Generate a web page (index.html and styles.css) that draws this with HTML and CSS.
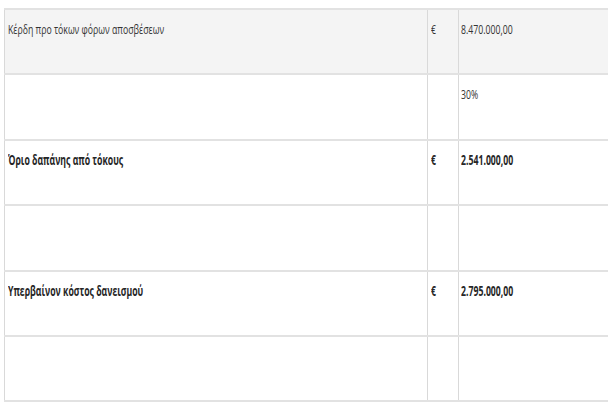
FILE: index.html
```html
<!DOCTYPE html>
<html lang="el">
<head>
<meta charset="utf-8">
<link rel="stylesheet" href="styles.css">
</head>
<body>
<table class="calc">
  <tr class="shaded">
    <td class="label"><span class="txt">Κέρδη προ τόκων φόρων αποσβέσεων</span></td>
    <td class="cur"><span class="txt">€</span></td>
    <td class="val"><span class="txt">8.470.000,00</span></td>
  </tr>
  <tr>
    <td class="label"></td>
    <td class="cur"></td>
    <td class="val"><span class="txt">30%</span></td>
  </tr>
  <tr class="strong">
    <td class="label"><span class="txt">Όριο δαπάνης από τόκους</span></td>
    <td class="cur"><span class="txt">€</span></td>
    <td class="val"><span class="txt">2.541.000,00</span></td>
  </tr>
  <tr>
    <td class="label"></td>
    <td class="cur"></td>
    <td class="val"></td>
  </tr>
  <tr class="strong">
    <td class="label"><span class="txt">Υπερβαίνον κόστος δανεισμού</span></td>
    <td class="cur"><span class="txt">€</span></td>
    <td class="val"><span class="txt">2.795.000,00</span></td>
  </tr>
  <tr>
    <td class="label"></td>
    <td class="cur"></td>
    <td class="val"></td>
  </tr>
</table>
</body>
</html>
```
FILE: styles.css
```css
html, body {
  background: #ffffff;
}
body {
  margin: 8px 4px 0 4px;
  font-family: "Open Sans", "Noto Sans", sans-serif;
  font-size: 13.5px;
  color: #333333;
}
.calc {
  width: 605px;
  border-collapse: collapse;
  table-layout: fixed;
}
.calc tr {
  height: 65.4px;
}
.calc td {
  border-top: 2px solid #e2e2e2;
  border-bottom: 2px solid #e2e2e2;
  border-left: 1px solid #d9d9d9;
  border-right: 1px solid #d9d9d9;
  vertical-align: top;
  padding: 10px 3px 0 3px;
  line-height: 18px;
  overflow: hidden;
  white-space: nowrap;
}
.calc .label { width: 416px; }
.calc .cur { width: 24px; }
.calc .val { width: 145px; padding-left: 2px; }
.shaded td {
  background: #f4f4f4;
}
.strong td {
  font-weight: 700;
  color: #262626;
}
.txt {
  display: inline-block;
  transform: scaleX(0.645);
  transform-origin: left center;
}
```
